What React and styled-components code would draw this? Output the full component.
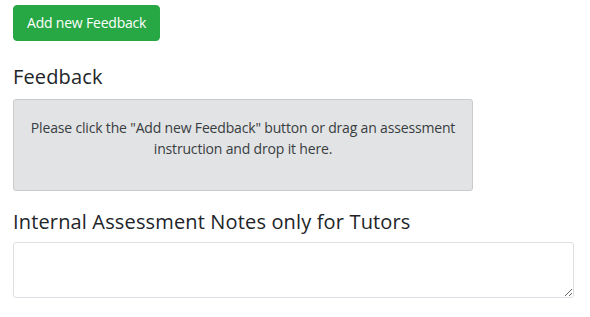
import React from "react";
import styled, { createGlobalStyle } from "styled-components";

const GlobalStyle = createGlobalStyle`
  body {
    margin: 0;
    background: #fff;
    font-family: "Open Sans", "Liberation Sans", sans-serif;
    color: #212529;
  }
`;

const Page = styled.div`
  padding: 5px 16px 0 13px;
  display: flex;
  flex-direction: column;
  align-items: flex-start;
`;

const AddButton = styled.button`
  font-family: inherit;
  font-size: 14px;
  line-height: 20px;
  letter-spacing: -0.2px;
  padding: 7px 13px;
  height: 36px;
  color: #fff;
  background: #28a745;
  border: 1px solid #28a745;
  border-radius: 4px;
  cursor: pointer;
`;

const SectionTitle = styled.h5`
  margin: ${(p) => p.$top}px 0 ${(p) => p.$bottom}px;
  font-size: 20px;
  font-weight: 400;
  line-height: 24px;
  letter-spacing: 0.15px;
  color: #212529;
`;

const DropZone = styled.div`
  box-sizing: border-box;
  width: 460px;
  height: 92px;
  padding: 17px 10px;
  background: #e2e3e5;
  border: 1px solid #c8cacc;
  border-radius: 3px;
  color: #383d41;
  font-size: 14px;
  line-height: 21px;
  letter-spacing: -0.17px;
  text-align: center;
`;

const Notes = styled.textarea`
  box-sizing: border-box;
  display: block;
  width: 561px;
  height: 56px;
  border: 1px solid #dcdfe3;
  border-radius: 3px;
  font-family: inherit;
  font-size: 14px;
  padding: 6px 12px;
  resize: vertical;
  outline: none;
`;

export default function App() {
  return (
    <>
      <GlobalStyle />
      <Page>
        <AddButton>Add new Feedback</AddButton>
        <SectionTitle $top={24} $bottom={10}>Feedback</SectionTitle>
        <DropZone>
          Please click the "Add new Feedback" button or drag an assessment
          <br />
          instruction and drop it here.
        </DropZone>
        <SectionTitle $top={19} $bottom={8}>
          Internal Assessment Notes only for Tutors
        </SectionTitle>
        <Notes />
      </Page>
    </>
  );
}
